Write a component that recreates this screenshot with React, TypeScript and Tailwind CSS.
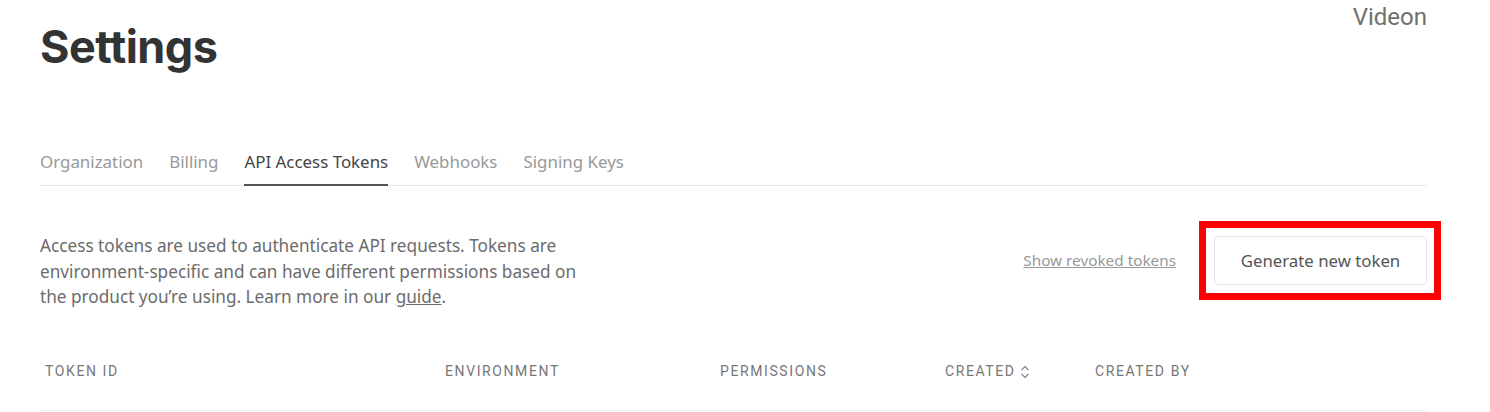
import React from "react";

export default function App() {
  const tabs = ["Organization", "Billing", "API Access Tokens", "Webhooks", "Signing Keys"];
  return (
    <div className="w-[1490px] h-[412px] overflow-hidden bg-white" style={{ fontFamily: '"Noto Sans", sans-serif' }}>
      <div className="pl-[40px] pr-[63px]">
        <div className="flex justify-between items-start">
          <h1 className="mt-[19px] text-[45px] leading-[56px] font-bold text-[#333] tracking-[-0.5px]" style={{ fontFamily: 'Inter, sans-serif' }}>
            Settings
          </h1>
          <div className="mt-[3px] text-[24px] leading-[28px] text-[#707070]" style={{ fontFamily: 'Roboto, sans-serif' }}>
            Videon
          </div>
        </div>

        <div className="mt-[76px] flex gap-[26px] border-b border-[#e6e6e6]">
          {tabs.map((t, i) => (
            <div
              key={t}
              className={
                "pb-[11px] text-[16.9px] leading-[22px] border-b-2 -mb-px " +
                (i === 2 ? "border-[#555] text-[#444]" : "border-transparent text-[#999]")
              }
            >
              {t}
            </div>
          ))}
        </div>

        <div className="mt-[47px] flex justify-between items-start">
          <p className="w-[550px] text-[17.2px] leading-[25.5px] text-[#6b6b6b]">
            Access tokens are used to authenticate API requests. Tokens are environment-specific and can have different permissions based on the product you’re using. Learn more in our <span className="underline">guide</span>.
          </p>
          <div className="flex items-center gap-[38px] mt-[3px]">
            <a className="text-[15.3px] text-[#999] underline">Show revoked tokens</a>
            <div className="relative">
              <button className="w-[213px] h-[49px] border border-[#e3e3e3] rounded-[4px] text-[16.8px] text-[#555] bg-white">
                Generate new token
              </button>
              <div className="absolute -left-[15px] -top-[15px] -right-[14px] -bottom-[15px] border-[7px] border-[#ff0000] pointer-events-none" />
            </div>
          </div>
        </div>

        <div className="mt-[24px] flex items-center h-[77px] border-b border-[#eeeeee] text-[14px] text-[#777] uppercase tracking-[1.6px]" style={{ fontFamily: 'Roboto, sans-serif' }}>
          <div className="w-[405px] pl-[5px]">Token ID</div>
          <div className="w-[275px]">Environment</div>
          <div className="w-[225px]">Permissions</div>
          <div className="w-[150px] flex items-center gap-[4px]">
            Created
            <svg width="10" height="14" viewBox="0 0 10 14" fill="none" stroke="#888" strokeWidth="1.2">
              <path d="M1.5 5 L5 1.5 L8.5 5" />
              <path d="M1.5 9 L5 12.5 L8.5 9" />
            </svg>
          </div>
          <div>Created by</div>
        </div>
      </div>
    </div>
  );
}
